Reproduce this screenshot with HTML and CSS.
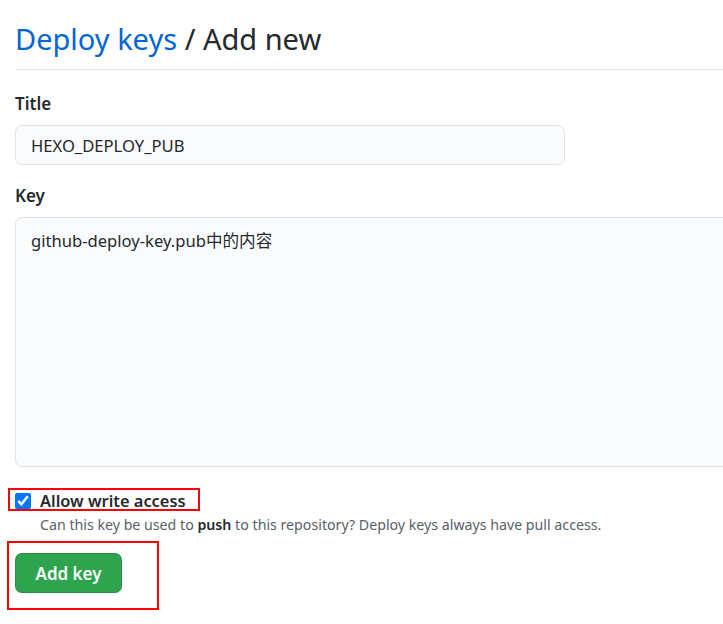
FILE: index.html
```html
<!DOCTYPE html>
<html lang="zh">
<head>
<meta charset="utf-8">
<title>Deploy keys / Add new</title>
<link rel="stylesheet" href="styles.css">
</head>
<body>
<div class="page">
  <div class="subhead">
    <h2 class="subhead-heading"><a class="crumb" href="#">Deploy keys</a> / Add new</h2>
  </div>
  <form class="key-form">
    <div class="form-group">
      <label class="form-label" for="title">Title</label>
      <input class="form-control title-input" id="title" type="text" value="HEXO_DEPLOY_PUB">
    </div>
    <div class="form-group">
      <label class="form-label" for="key">Key</label>
      <textarea class="form-control key-input" id="key">github-deploy-key.pub中的内容</textarea>
    </div>
    <div class="form-checkbox">
      <label class="check-label"><input class="check" type="checkbox" checked> Allow write access</label>
      <p class="note">Can this key be used to <strong>push</strong> to this repository? Deploy keys always have pull access.</p>
    </div>
    <div class="actions">
      <button class="btn-primary" type="button">Add key</button>
    </div>
  </form>
  <div class="mark mark-check"></div>
  <div class="mark mark-button"></div>
</div>
</body>
</html>
```

FILE: styles.css
```css
html {
  overflow: hidden;
}
body {
  margin: 0;
  background: #ffffff;
  color: #24292e;
  font-family: "Noto Sans", "Noto Sans CJK SC", sans-serif;
  font-size: 17px;
}
.page {
  position: relative;
  box-sizing: border-box;
  width: 740px;
  min-height: 624px;
  padding: 20px 0 0 15px;
}
.subhead {
  padding-bottom: 11px;
  border-bottom: 1px solid #e1e4e8;
}
.subhead-heading {
  margin: 0;
  font-size: 29px;
  font-weight: 400;
  line-height: 38px;
  color: #24292e;
}
.crumb {
  color: #0366d6;
  text-decoration: none;
}
.key-form {
  padding-top: 21px;
}
.form-group {
  display: flex;
  flex-direction: column;
  margin-bottom: 18px;
}
.form-label {
  font-size: 17px;
  font-weight: 600;
  line-height: 25px;
  margin-bottom: 9px;
}
.form-control {
  box-sizing: border-box;
  font-family: "Noto Sans", "Noto Sans CJK SC", sans-serif;
  font-size: 16.6px;
  color: #24292e;
  background: #fafbfc;
  border: 1px solid #e1e4e8;
  border-radius: 7px;
  outline: none;
}
.title-input {
  width: 550px;
  height: 40px;
  padding: 0 15px;
}
.key-input {
  width: 740px;
  height: 250px;
  padding: 10px 15px;
  line-height: 25px;
  resize: none;
}
.form-checkbox {
  margin-top: 23px;
}
.check-label {
  display: flex;
  align-items: center;
  gap: 9px;
  font-size: 16.4px;
  font-weight: 600;
  line-height: 22px;
}
.check {
  width: 16px;
  height: 16px;
  margin: 0;
  accent-color: #0075ff;
}
.note {
  margin: 2px 0 0 25px;
  font-size: 14.2px;
  line-height: 22px;
  color: #586069;
}
.note strong {
  color: #24292e;
  font-weight: 600;
}
.actions {
  margin-top: 17px;
}
.btn-primary {
  width: 107px;
  height: 40px;
  border: 1px solid rgba(27, 31, 35, 0.15);
  border-radius: 7px;
  background: #2ea44f;
  color: #ffffff;
  font-family: "Noto Sans", sans-serif;
  font-size: 17px;
  font-weight: 600;
}
.mark {
  position: absolute;
  border: 2px solid #ff0000;
  box-sizing: border-box;
}
.mark-check {
  left: 8px;
  top: 488px;
  width: 192px;
  height: 23px;
}
.mark-button {
  left: 7px;
  top: 541px;
  width: 152px;
  height: 69px;
}
```
